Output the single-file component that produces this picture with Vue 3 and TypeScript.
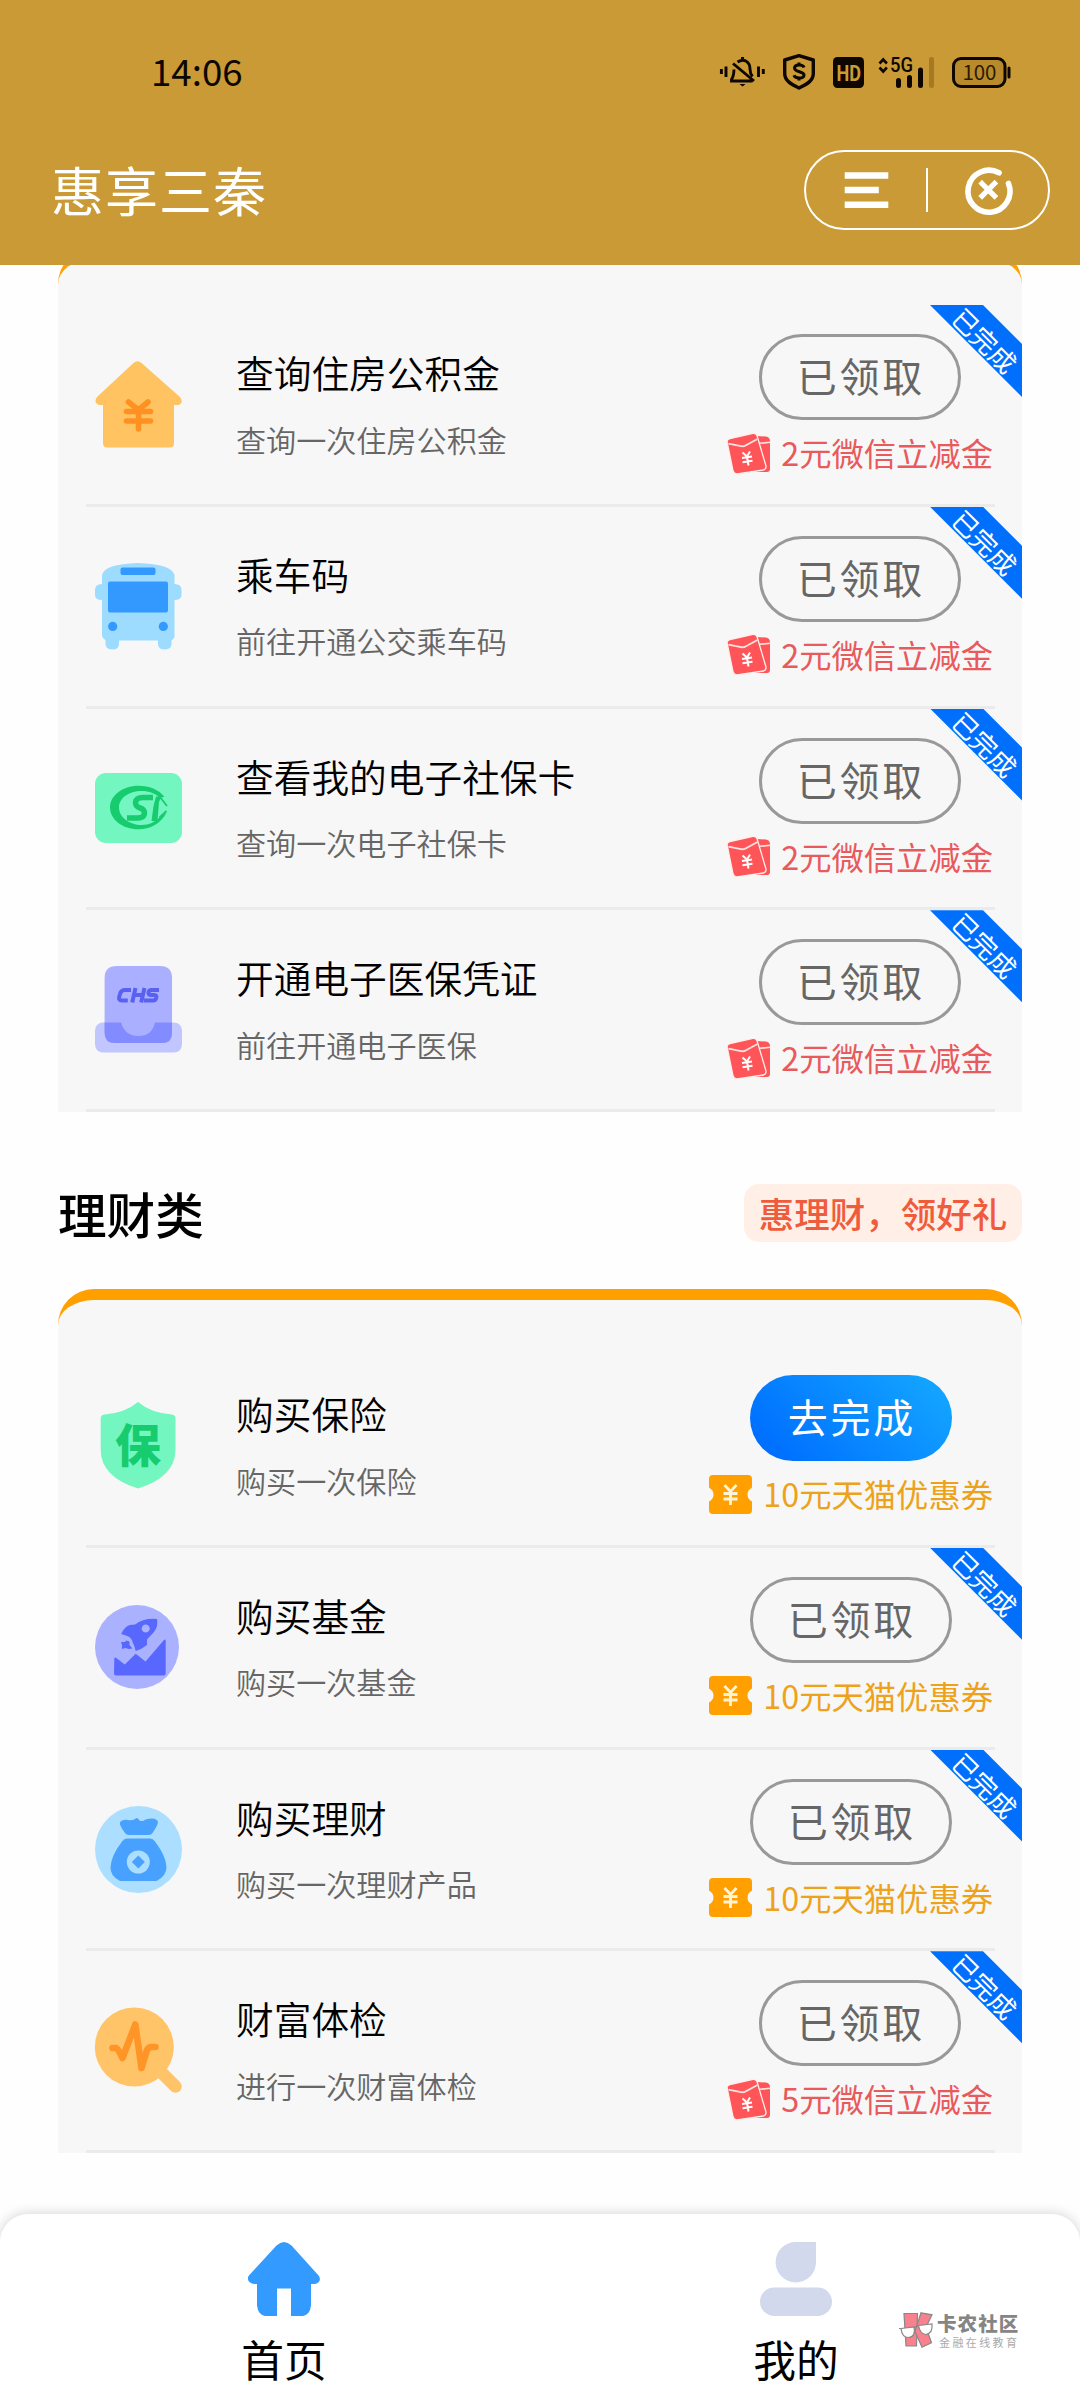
<script setup lang="ts">
type Reward = 'packet' | 'coupon'
interface Task {
  icon: string
  title: string
  desc: string
  reward: Reward
  amount: string
  done: boolean
}

const services: Task[] = [
  { icon: 'house', title: '查询住房公积金', desc: '查询一次住房公积金', reward: 'packet', amount: '2元微信立减金', done: true },
  { icon: 'bus', title: '乘车码', desc: '前往开通公交乘车码', reward: 'packet', amount: '2元微信立减金', done: true },
  { icon: 'social', title: '查看我的电子社保卡', desc: '查询一次电子社保卡', reward: 'packet', amount: '2元微信立减金', done: true },
  { icon: 'medical', title: '开通电子医保凭证', desc: '前往开通电子医保', reward: 'packet', amount: '2元微信立减金', done: true },
]

const finance: Task[] = [
  { icon: 'shield', title: '购买保险', desc: '购买一次保险', reward: 'coupon', amount: '10元天猫优惠券', done: false },
  { icon: 'fund', title: '购买基金', desc: '购买一次基金', reward: 'coupon', amount: '10元天猫优惠券', done: true },
  { icon: 'money', title: '购买理财', desc: '购买一次理财产品', reward: 'coupon', amount: '10元天猫优惠券', done: true },
  { icon: 'health', title: '财富体检', desc: '进行一次财富体检', reward: 'packet', amount: '5元微信立减金', done: true },
]

const groups: Task[][] = [services, finance]
</script>

<template>
  <div class="page">
    <header class="header">
      <div class="status">
        <span class="time">14:06</span>
        <div class="status-icons">
          <svg class="s-mute" width="45" height="32" viewBox="0 0 45 32" fill="none" stroke="#0d0700" stroke-width="2.9">
            <path d="M1.400 13v5M6 10.500v10.500M38.500 10.500v10.500M43.300 13v5" />
            <path d="M14 13.500c-.2 5-1 8-2.500 10v1.500h21M17.500 6c7-4.500 12.500.5 12.500 7 0 3 .8 5.500 2.500 7.500M13 7.500l21 17.500M22.500 1v3" />
            <path d="M19.500 28h6l-3 2.500z" fill="#0d0700" stroke="none" />
          </svg>
          <svg class="s-shield" width="32" height="36" viewBox="0 0 32 36" fill="none" stroke="#0d0700">
            <path d="M16 1.700L30.300 6v13.500c0 7-6 10.500-14.300 14.500C7.700 30 1.700 26.500 1.700 19.500V6z" stroke-width="3.400" stroke-linejoin="round" />
            <path d="M21 13.500c-1-3.500-9.500-3.500-9.500.5 0 4.500 9.500 3 9.500 7 0 4-8.800 4-10 .3M16 8.500v3M16 23.500v3" stroke-width="3" />
          </svg>
          <svg class="s-hd" width="31" height="31" viewBox="0 0 31 31">
            <rect width="31" height="31" rx="4.500" fill="#0d0700" />
            <text x="3.500" y="23.500" textLength="24.500" lengthAdjust="spacingAndGlyphs" font-family="Roboto, sans-serif" font-weight="700" font-size="22" fill="#cb9b34">HD</text>
          </svg>
          <svg class="s-signal" width="57" height="31" viewBox="0 0 57 31">
            <path d="M1.500 6.500L5.200 2.500l3.700 4M1.500 10.500l3.700 4 3.700-4" fill="none" stroke="#0d0700" stroke-width="2.600" />
            <text x="12" y="15" textLength="23" lengthAdjust="spacingAndGlyphs" font-family="Roboto, sans-serif" font-weight="500" font-size="20" fill="#0d0700">5G</text>
            <path d="M20.500 23.500v5M31.500 20.500v8M42.500 13v15.500" stroke="#0d0700" stroke-width="5" stroke-linecap="round" />
            <path d="M53.500 2.500v26" stroke="#a67a20" stroke-width="5" stroke-linecap="round" />
          </svg>
          <svg class="s-battery" width="59" height="31" viewBox="0 0 59 31">
            <rect x="1.500" y="1.500" width="51.500" height="28" rx="7.500" fill="#b98a2b" stroke="#0d0700" stroke-width="3" />
            <path d="M57 11v9" stroke="#0d0700" stroke-width="3" stroke-linecap="round" />
            <text x="27.500" y="22.500" text-anchor="middle" textLength="34" font-family="Noto Sans CJK SC, sans-serif" font-size="20.500" fill="#2a1a00">100</text>
          </svg>
        </div>
      </div>
      <div class="navbar">
        <h1 class="app-title">惠享三秦</h1>
        <div class="capsule">
          <svg width="242" height="76" viewBox="2 2 242 76" fill="none" stroke="#fff">
            <path d="M44 25.500h37M44 40h27.500M44 54.700h37" stroke-width="6.600" stroke-linecap="square" />
            <path d="M123 18v44" stroke-width="2" />
            <path d="M195 22.800A21 21 0 1 0 204.500 33.500" stroke-width="5.600" stroke-linecap="round" />
            <path d="M178 33.500l12.600 12.600M190.600 33.500L178 46.100" stroke-width="5.200" stroke-linecap="square" />
          </svg>
        </div>
      </div>
    </header>

    <main class="content">
      <template v-for="(group, gi) in groups" :key="gi">
        <div v-if="gi === 1" class="section-head">
          <h2>理财类</h2>
          <span class="slogan">惠理财，领好礼</span>
        </div>
        <section class="card">
          <article v-for="task in group" :key="task.title" class="row">
            <div class="icon">
              <svg v-if="task.icon === 'house'" width="87" height="87" viewBox="0 0 87 87">
                <path d="M38.500 2q4-3.500 8 0L85 36q4 5-1 8h-5v38q0 4.500-4.500 4.500h-62Q8 86.500 8 82V44H4q-6-3-2-8z" fill="#ffc361" />
                <path d="M33.500 41L43.500 49l9.500-8M43.500 49v19M31.500 50.500h24M31.500 60h24" fill="none" stroke="#ff9122" stroke-width="5.600" stroke-linecap="round" />
              </svg>
              <svg v-else-if="task.icon === 'bus'" width="87" height="87" viewBox="0 0 87 87">
                <path d="M7 12Q9 1 43 0q34 1 36.500 12v9q7 0 7 6v5q0 5-7 5v36q0 3-3 4v4q0 5-6.500 5.500Q63 86.500 63 81v-3.500H24V81q0 5.500-7 5.500Q10.500 86 10.500 81v-4Q7 75 7 72V37Q0 37 0 32v-5q0-6 7-6z" fill="#9ddcff" />
                <g fill="#3399ff">
                  <rect x="25.500" y="4.500" width="35" height="7.500" rx="2" />
                  <rect x="13" y="18.500" width="60" height="31" rx="2" />
                  <circle cx="17.700" cy="63.400" r="4.600" />
                  <circle cx="68.300" cy="63.400" r="4.600" />
                </g>
              </svg>
              <svg v-else-if="task.icon === 'social'" width="87" height="70" viewBox="0 0 87 70">
                <rect width="87" height="70" rx="11" fill="#74f6c0" />
                <path fill="#17cc6e" d="M69.500 24C64 16.500 54 12.700 43.500 12.700 27.500 12.700 15 22.500 15 34.500S27.500 56.300 43.500 56.300C55 56.300 66 50.500 71.500 39.500L64.500 44.500C60 49 54 52 47 52 34 52 24 44 24 34.500S34 18 46.500 18C54 18 60.500 20.500 64.500 24.500z" />
                <path d="M58 24.500H47.500c-8 0-9.500 8.500-2.500 10.500 7 2 5.500 10-2 10H32" fill="none" stroke="#17cc6e" stroke-width="5.600" />
                <path d="M61 23.500h5.500L64 29l-1.500 19h-6L58.500 33z" fill="#17cc6e" />
                <path d="M65 24l7 9M71.500 38l-7 6.500" stroke="#17cc6e" stroke-width="1.800" />
              </svg>
              <svg v-else-if="task.icon === 'medical'" width="87" height="87" viewBox="0 0 87 87">
                <rect y="56.500" width="87" height="30" rx="8" fill="#c2c6ff" />
                <path d="M21.600 0H65q12 0 12 12v55q0 10-10 10H20q-10.400 0-10.400-10V12q0-12 12-12z" fill="#aab0ff" />
                <path d="M9.600 56.500H26Q30 70 43.500 70T60 56.500h17V67q0 10-10 10H20q-10.400 0-10.400-10z" fill="#828bff" />
                <g fill="none" stroke="#5a61f0" stroke-width="4">
                  <path d="M36 24H30q-4 0-5 4l-.7 2.500q-1 4 2.500 4h6M40.500 22l-3.300 14.500M49.500 22l-3.300 14.500M39 29h8M64 24h-7.500q-2.500 0-3 2.500T56 29h3q3 0 2.300 2.800T58 34.500h-9" />
                </g>
              </svg>
              <svg v-else-if="task.icon === 'shield'" width="87" height="87" viewBox="0 0 87 87">
                <path d="M43 0Q56 11 77 12.500q3.500.5 3.500 4V48Q80 75 43 86.500 6 75 5.700 48V16.500q0-3.500 3.500-4Q30 11 43 0z" fill="#74f6c0" />
                <text x="43" y="60" text-anchor="middle" font-family="Noto Sans CJK SC, sans-serif" font-weight="900" font-size="46" fill="#17cc6e">保</text>
              </svg>
              <svg v-else-if="task.icon === 'fund'" width="84" height="84" viewBox="0 0 84 84">
                <circle cx="42" cy="42" r="42" fill="#aab2ff" />
                <g fill="#5868ff">
                  <path d="M19.300 53q1-1 2 0l8.500 6.500L40.700 48.700 50.500 56.500 69 35q1.700-1 1.700.5V68.500q0 2-2 2H21q-2 0-2-2z" />
                  <path fill-rule="evenodd" d="M62 14q1.500 7-3 13l-7 7.500V40q-5 4-11.300 6-1-5-3-8.500-1-5-5.500-6.500l-6-2q3-7 8.500-9l5.500-.5Q48 13 62 14zM50.700 19.500a4 4 0 1 0 .01 0z" />
                  <path d="M31 35.500l3.500 1v3.500l3 3.500-4 .5-3-1-3.500 1v-4l-1-3h4z" />
                </g>
              </svg>
              <svg v-else-if="task.icon === 'money'" width="87" height="87" viewBox="0 0 87 87">
                <circle cx="43.500" cy="43.500" r="43.500" fill="#acdfff" />
                <g fill="#49a1ff">
                  <path d="M30 27Q24 19 25 16.500q2-3.500 8-2.500 5 1 8.500-2 2 0 3 2.500 3 1.500 6-1 11-3 12.500 2.500Q63 19 57.500 27q-1 2-4 2H34q-3 0-4-2z" />
                  <path d="M32 32.500h23q3 0 5 3Q71 50 71.500 61q0 9-10 14H25q-10-5-9.500-14Q16 50 27 35.500q2-3 5-3z" />
                </g>
                <circle cx="43.300" cy="56" r="11.500" fill="#acdfff" />
                <path d="M43.300 49.500l6.500 6.500-6.500 6.500-6.500-6.500z" fill="#49a1ff" />
              </svg>
              <svg v-else width="87" height="87" viewBox="0 0 87 87">
                <path d="M67 66l13.500 13.500" stroke="#ffc467" stroke-width="12.500" stroke-linecap="round" />
                <circle cx="39.300" cy="40" r="39.500" fill="#ffc467" />
                <path d="M17.500 41H21q2 .5 6.500 10L40.300 17.500 46.500 61 52 43q1-2.500 4-3h4.500" fill="none" stroke="#ff9427" stroke-width="6.600" stroke-linecap="round" stroke-linejoin="round" />
              </svg>
            </div>
            <div class="info">
              <h3>{{ task.title }}</h3>
              <p>{{ task.desc }}</p>
            </div>
            <div class="action">
              <button class="btn" :class="{ primary: !task.done }">{{ task.done ? '已领取' : '去完成' }}</button>
              <div class="reward" :class="task.reward">
                <svg v-if="task.reward === 'packet'" width="43" height="41" viewBox="0 0 43 41">
                  <path d="M30 3l9 .5q3.500.5 4 4V36q0 3-3 3H24z" fill="#ff5558" />
                  <path d="M32.500 10.300l11-1" stroke="#ffe3e0" stroke-width="1.600" />
                  <path d="M0 8.500Q.5 6 3 5.500L26 .3q3-.3 4 2.200L39 33q.5 3-2.500 4L10 40.800q-3 .2-4-3z" fill="#ff5558" stroke="#fff0ee" stroke-width="1.300" />
                  <path d="M1.500 10.700l12.500 2.500q3 .3 5-1L30.500 6" fill="none" stroke="#ffe3e0" stroke-width="1.800" />
                  <path d="M15.500 19.500l4.500 4 3-5M20 23.500l1.500 9M15 25l10-1.500M15.500 29.200l10-1.500" fill="none" stroke="#fff" stroke-width="2" />
                </svg>
                <svg v-else width="43" height="39" viewBox="0 0 43 39">
                  <path d="M4 0h35q4 0 4 4v8.500q-4.500 2.500-4.500 7t4.500 7V35q0 4-4 4H4q-4 0-4-4v-8.500q4.500-2.500 4.500-7T0 12.500V4q0-4 4-4z" fill="#ffa000" />
                  <path d="M15.500 10l6 6.500 6-6.500M21.500 16.500V30M14.500 18.500h14M14.500 24h14" fill="none" stroke="#fff3d6" stroke-width="2.800" />
                </svg>
                <span>{{ task.amount }}</span>
              </div>
            </div>
            <div v-if="task.done" class="ribbon"><span>已完成</span></div>
          </article>
        </section>
      </template>
    </main>

    <footer class="tabbar">
      <div class="tab">
        <svg width="72" height="74" viewBox="0 0 72 74">
          <path d="M28.500 3.500q7.500-7 15 0L71 34q3 6-4 8h-4v21.500q-1 9-8 10.500H43V46.500H29V74H17q-7-1.500-8-10.500V42H6q-8-2-5.500-8z" fill="#339bff" />
        </svg>
        <span>首页</span>
      </div>
      <div class="tab">
        <svg width="72" height="74" viewBox="0 0 72 74" fill="#d2d9ec">
          <path d="M36 0h20v20.500A20.200 20.200 0 1 1 36 0z" />
          <rect y="45.500" width="72" height="28.500" rx="14.200" />
        </svg>
        <span>我的</span>
      </div>
      <div class="watermark">
        <svg width="36" height="36" viewBox="0 0 36 36" stroke="#888" stroke-width="1.200">
          <path d="M5 1.500h13.500L17.500 34H7z" fill="#f9808d" />
          <path d="M22 .8l11 2-6 12.500 5.500 15.500-9.500 4.500L16 19.500z" fill="#f9808d" />
          <path d="M2 16.500l13-1.500q2 10-5.500 10.500Q3 25.500 2 16.500zM19.500 13.500L33 12q1 9-6 10.500-6-.5-7.500-9zM0 16.500h3M15 15.500l4.500-2" fill="#fff" />
        </svg>
        <div class="wm-text">
          <b>卡农社区</b>
          <i>金融在线教育</i>
        </div>
      </div>
    </footer>
  </div>
</template>

<style>
html,
body {
  margin: 0;
  background: #fff;
}
</style>

<style scoped>
.page {
  width: 1080px;
  height: 2400px;
  display: flex;
  flex-direction: column;
  overflow: hidden;
  background: #fefefe;
  font-family: 'Noto Sans CJK SC', 'Noto Sans', sans-serif;
  color: #000;
}
h1, h2, h3, p { margin: 0; font-weight: 400; }
svg { display: block; flex: none; overflow: visible; }

.header {
  height: 265px;
  flex: none;
  background: #c99a35;
  position: relative;
  z-index: 1;
}
.status {
  height: 150px;
  box-sizing: border-box;
  padding: 47px 69px 0 151px;
  display: flex;
  justify-content: space-between;
}
.time { font-size: 36.700px; line-height: 47px; color: #0d0700; }
.status-icons { display: flex; height: 50px; align-items: center; }
.s-shield { margin-left: 18px; }
.s-hd { margin-left: 18px; }
.s-signal { margin-left: 14px; }
.s-battery { margin-left: 17px; }
.navbar {
  display: flex;
  justify-content: space-between;
  padding: 0 30px 0 51px;
}
.app-title { font-size: 53px; letter-spacing: 1px; line-height: 78px; color: #fff; }
.capsule { width: 242px; height: 76px; border: 2px solid #fff; border-radius: 40px; }

.content { flex: 1; padding: 0 58px; margin-top: -17px; }
.card {
  background: #f7f7f7;
  border-top: 11px solid #ffa000;
  border-radius: 36px 36px 0 0;
  padding-top: 46px;
}
.row {
  position: relative;
  height: 201.750px;
  box-sizing: border-box;
  margin: 0 27.500px;
  padding-left: 9px;
  display: flex;
  border-bottom: 3px solid #ebebeb;
}
.icon { width: 141.500px; height: 199px; display: flex; align-items: center; }
.info { flex: 1; padding-top: 39px; }
.info h3 { font-size: 37.700px; line-height: 56px; white-space: nowrap; font-weight: 350; }
.info p { font-size: 30.100px; line-height: 44px; margin: 16.500px 0 0; color: #666; white-space: nowrap; font-weight: 350; }
.action { display: flex; flex-direction: column; align-items: center; padding-top: 29px; margin-right: 1.500px; }
.btn {
  width: 202px;
  height: 86px;
  box-sizing: border-box;
  padding: 0 0 4px 2px;
  border: 3px solid #999;
  border-radius: 43px;
  background: none;
  font-family: inherit;
  font-size: 40px;
  letter-spacing: 2.700px;
  line-height: 76px;
  color: #666;
}
.btn.primary {
  border: 0;
  color: #fff;
  background: linear-gradient(45deg, #0070ff 12%, #12a2ff 88%);
}
.reward {
  display: flex;
  align-items: center;
  gap: 11.500px;
  height: 44px;
  margin-top: 11px;
  font-size: 32.300px;
  white-space: nowrap;
}
.reward span { line-height: 44px; margin-top: -2px; }
.packet { color: #e85a5c; }
.coupon { color: #eda21c; }
.ribbon {
  position: absolute;
  top: 0;
  right: -27.500px;
  width: 92px;
  height: 92px;
  background: #0070fc;
  clip-path: polygon(0 0, 53px 0, 92px 39px, 92px 92px);
}
.ribbon span {
  position: absolute;
  left: 15px;
  top: 20px;
  width: 80px;
  height: 30px;
  font-size: 26px;
  line-height: 30px;
  text-align: center;
  white-space: nowrap;
  color: #fff;
  transform: rotate(45deg);
}
.section-head {
  height: 177px;
  display: flex;
  align-items: flex-start;
  justify-content: space-between;
}
.section-head h2 { font-size: 48.600px; line-height: 72px; font-weight: 500; margin-top: 65px; }
.slogan {
  margin-top: 72px;
  width: 278px;
  height: 58px;
  border-radius: 15px;
  background: #ffefe6;
  color: #f05b3d;
  font-size: 35.500px;
  line-height: 57px;
  font-weight: 500;
  text-align: center;
  white-space: nowrap;
}

.tabbar {
  flex: none;
  height: 186px;
  box-sizing: border-box;
  padding: 28px 28px 0;
  display: flex;
  position: relative;
  background: #fff;
  border-radius: 28px 28px 0 0;
  box-shadow: 0 -1px 12px rgba(0, 0, 0, 0.16);
}
.tab { flex: 1; display: flex; flex-direction: column; align-items: center; }
.tab span { font-size: 42.700px; line-height: 60px; margin-top: 12px; }
.watermark { position: absolute; left: 899px; top: 98px; display: flex; }
.wm-text { display: flex; flex-direction: column; margin-left: 2px; }
.wm-text b { font-size: 19.500px; letter-spacing: 1.100px; line-height: 22px; color: #858585; font-weight: 900; white-space: nowrap; }
.wm-text i { font-size: 11px; letter-spacing: 2.400px; line-height: 14px; margin: 1px 0 0 2px; color: #aaa; font-style: normal; white-space: nowrap; }
</style>
